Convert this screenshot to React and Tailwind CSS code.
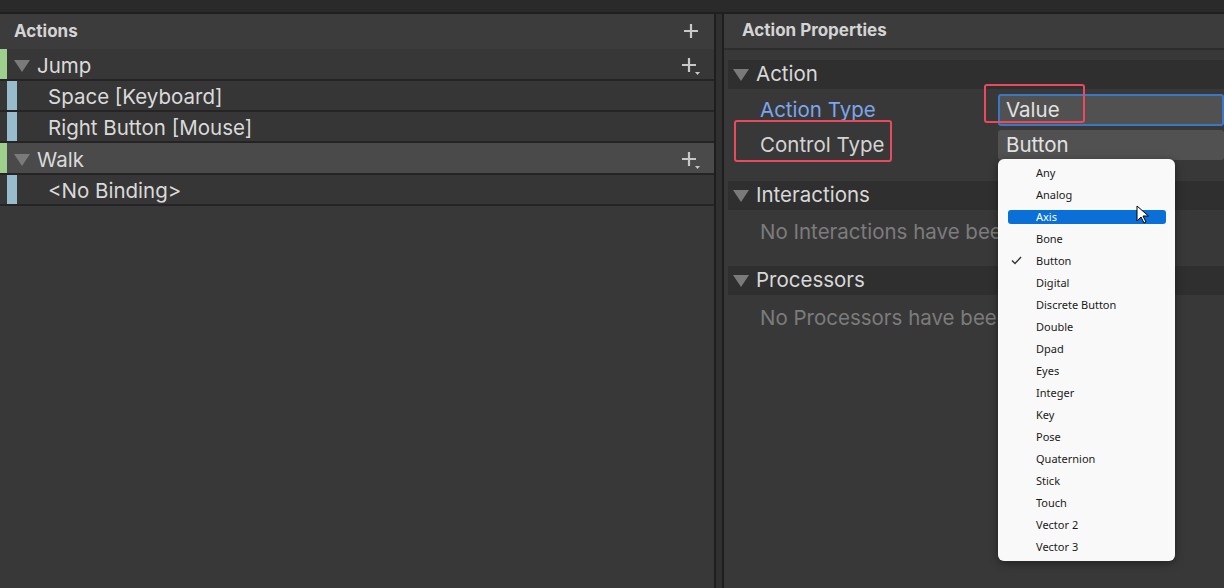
import React from 'react';

const font = { fontFamily: 'Inter, "Noto Sans", sans-serif' };

function Plus({ drop }) {
  return (
    <svg width="20" height="20" viewBox="0 0 20 20" className="shrink-0">
      <path d="M9 2v14M2 9h14" stroke="#c8c8c8" strokeWidth="2.2" fill="none" />
      {drop && <path d="M15 16h5l-2.5 3z" fill="#c8c8c8" />}
    </svg>
  );
}

function Tri() {
  return (
    <svg width="16" height="13" viewBox="0 0 16 13" className="shrink-0">
      <path d="M0 1h16L8 13z" fill="#7a7a7a" />
    </svg>
  );
}

function ActionRow({ name, selected }) {
  return (
    <div className={`flex items-center h-[32px] border-b-2 border-[#242424] ${selected ? 'bg-[#4a4a4a]' : 'bg-[#373737]'}`}>
      <div className="w-[7px] h-full bg-[#9fcf8d]" />
      <div className="ml-[7px] mr-[7px] mt-[2px]"><Tri /></div>
      <span className="mt-[4px] text-[20.5px] text-[#dadada]">{name}</span>
      <div className="ml-auto mr-[14px] mt-[4px]"><Plus drop /></div>
    </div>
  );
}

function BindingRow({ name }) {
  return (
    <div className="flex items-center h-[31px] border-b-2 border-[#242424] bg-[#363636]">
      <div className="w-[7px] h-full" />
      <div className="w-[10px] h-full bg-[#97bccb]" />
      <span className="ml-[31px] mt-[4px] text-[20.5px] text-[#dadada]">{name}</span>
    </div>
  );
}

function Section({ title, children }) {
  return (
    <div className="ml-[4px]">
      <div className="flex items-center h-[29px] bg-[#2f2f2f]">
        <div className="ml-[5px] mr-[7px]"><Tri /></div>
        <span className="text-[20.5px] text-[#d8d8d8]">{title}</span>
      </div>
      {children}
    </div>
  );
}

const items = ['Any', 'Analog', 'Axis', 'Bone', 'Button', 'Digital', 'Discrete Button', 'Double', 'Dpad', 'Eyes', 'Integer', 'Key', 'Pose', 'Quaternion', 'Stick', 'Touch', 'Vector 2', 'Vector 3'];

export default function App() {
  return (
    <div className="w-[1224px] h-[588px] overflow-hidden bg-[#2a2a2a] relative" style={font}>
      <div className="h-[12px]" />
      <div className="flex h-[576px] border-t-2 border-[#1f1f1f]">
        {/* Left: actions */}
        <div className="w-[714px] bg-[#383838] flex flex-col">
          <div className="flex items-center justify-between h-[35px] bg-[#3c3c3c] pl-[14px] pr-[12px]">
            <span className="text-[17px] font-bold text-[#d4d4d4]">Actions</span>
            <Plus />
          </div>
          <ActionRow name="Jump" />
          <BindingRow name="Space [Keyboard]" />
          <BindingRow name="Right Button [Mouse]" />
          <ActionRow name="Walk" selected />
          <BindingRow name="<No Binding>" />
        </div>
        {/* Splitter */}
        <div className="w-[10px] flex">
          <div className="w-[2px] bg-[#1e1e1e]" />
          <div className="flex-1 bg-[#303030]" />
          <div className="w-[2px] bg-[#1e1e1e]" />
        </div>
        {/* Right: properties */}
        <div className="flex-1 bg-[#383838] flex flex-col">
          <div className="flex items-center h-[36px] bg-[#3c3c3c] border-b-2 border-[#2d2d2d] pl-[18px]">
            <span className="text-[17px] font-bold text-[#d4d4d4]">Action Properties</span>
          </div>
          <div className="h-[10px]" />
          <Section title="Action">
            <div className="flex items-center h-[32px] mt-[5px]">
              <span className="ml-[32px] w-[238px] text-[20.5px] text-[#7ca6ec]">Action Type</span>
              <div className="flex items-center flex-1 h-[32px] bg-[#515151] border-2 border-[#3a78c6] rounded-[3px] pl-[6px]">
                <span className="text-[20.5px] text-[#e2e2e2]">Value</span>
              </div>
            </div>
            <div className="flex items-center h-[30px] mt-[4px]">
              <span className="ml-[32px] w-[238px] text-[20.5px] text-[#d4d4d4]">Control Type</span>
              <div className="flex items-center flex-1 h-[30px] bg-[#515151] rounded-[3px] pl-[8px]">
                <span className="text-[20.5px] text-[#e2e2e2]">Button</span>
              </div>
            </div>
          </Section>
          <div className="h-[21px]" />
          <Section title="Interactions">
            <div className="h-[44px] flex items-center">
              <span className="ml-[32px] text-[20.5px] text-[#7c7c7c] whitespace-nowrap">No Interactions have been added.</span>
            </div>
            <div className="h-[12px]" />
          </Section>
          <Section title="Processors">
            <div className="h-[46px] flex items-center">
              <span className="ml-[32px] text-[20.5px] text-[#7c7c7c] whitespace-nowrap">No Processors have been added.</span>
            </div>
          </Section>
        </div>
      </div>

      {/* Red highlight boxes */}
      <div className="absolute left-[984px] top-[84px] w-[101px] h-[39px] border-2 border-[#ea4a5c] rounded-[3px]" />
      <div className="absolute left-[734px] top-[120px] w-[158px] h-[42px] border-2 border-[#ea4a5c] rounded-[3px]" />

      {/* Dropdown menu */}
      <div className="absolute left-[998px] top-[159px] w-[177px] h-[402px] bg-[#f9f9f9] rounded-[6px] shadow-[0_2px_8px_rgba(0,0,0,0.4)] pt-[3px]" style={{ fontFamily: '"Noto Sans", "Open Sans", sans-serif' }}>
        {items.map((it) => (
          <div key={it} className="relative h-[22px] flex items-center px-[10px]">
            {it === 'Axis' && <div className="absolute left-[10px] right-[9px] top-[4px] h-[14px] rounded-[3px] bg-[#0a6fd6]" />}
            {it === 'Button' && (
              <svg className="absolute left-[13px] top-[6px]" width="11" height="9" viewBox="0 0 11 9">
                <path d="M1 4.5l3 3L10 1" stroke="#333" strokeWidth="1.4" fill="none" />
              </svg>
            )}
            <span className={`relative ml-[28px] text-[11px] ${it === 'Axis' ? 'text-white' : 'text-[#1a1a1a]'}`}>{it}</span>
          </div>
        ))}
      </div>

      {/* Mouse cursor */}
      <svg className="absolute left-[1136px] top-[205px]" width="14" height="19" viewBox="0 0 14 19">
        <path d="M1 1v15l4-4 3 6 2-1-3-6h5.5z" fill="#fff" stroke="#000" strokeWidth="1" />
      </svg>
    </div>
  );
}
